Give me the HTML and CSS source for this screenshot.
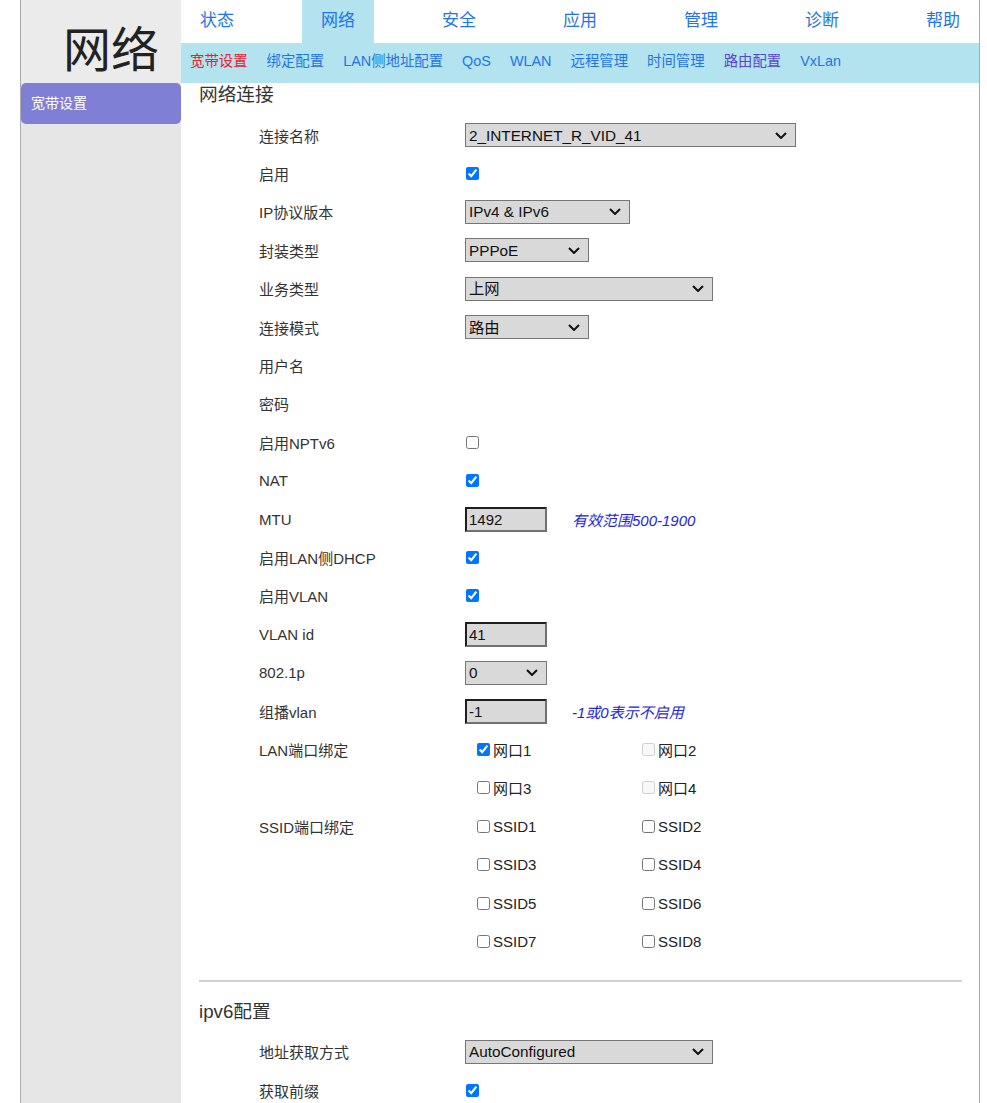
FILE: index.html
```html
<!DOCTYPE html>
<html lang="zh-CN">
<head>
<meta charset="utf-8">
<title>网络</title>
<link rel="stylesheet" href="styles.css">
</head>
<body>
<div class="page">
  <aside class="sidebar">
    <div class="side-title">网络</div>
    <a class="side-item" href="#">宽带设置</a>
  </aside>
  <div class="main">
    <nav class="tabs">
      <div class="tab"><a href="#">状态</a></div>
      <div class="tab"><a class="active" href="#">网络</a></div>
      <div class="tab"><a href="#">安全</a></div>
      <div class="tab"><a href="#">应用</a></div>
      <div class="tab"><a href="#">管理</a></div>
      <div class="tab"><a href="#">诊断</a></div>
      <div class="tab"><a href="#">帮助</a></div>
    </nav>
    <nav class="subnav">
      <a class="current" href="#">宽带设置</a>
      <a href="#">绑定配置</a>
      <a href="#">LAN侧地址配置</a>
      <a href="#">QoS</a>
      <a href="#">WLAN</a>
      <a href="#">远程管理</a>
      <a href="#">时间管理</a>
      <a class="visited" href="#">路由配置</a>
      <a href="#">VxLan</a>
    </nav>
    <div class="content">
      <h3 class="section-title">网络连接</h3>
      <div class="form">
        <div class="row"><span class="label">连接名称</span><span class="ctrl"><select class="sel w330"><option>2_INTERNET_R_VID_41</option></select></span></div>
        <div class="row"><span class="label">启用</span><span class="ctrl"><input type="checkbox" class="chk" checked></span></div>
        <div class="row"><span class="label">IP协议版本</span><span class="ctrl"><select class="sel w164"><option>IPv4 &amp; IPv6</option></select></span></div>
        <div class="row"><span class="label">封装类型</span><span class="ctrl"><select class="sel w123"><option>PPPoE</option></select></span></div>
        <div class="row"><span class="label">业务类型</span><span class="ctrl"><select class="sel w247"><option>上网</option></select></span></div>
        <div class="row"><span class="label">连接模式</span><span class="ctrl"><select class="sel w123"><option>路由</option></select></span></div>
        <div class="row"><span class="label">用户名</span><span class="ctrl"></span></div>
        <div class="row"><span class="label">密码</span><span class="ctrl"></span></div>
        <div class="row"><span class="label">启用NPTv6</span><span class="ctrl"><input type="checkbox" class="chk"></span></div>
        <div class="row"><span class="label">NAT</span><span class="ctrl"><input type="checkbox" class="chk" checked></span></div>
        <div class="row"><span class="label">MTU</span><span class="ctrl"><input type="text" class="txt" value="1492"><span class="hint">有效范围500-1900</span></span></div>
        <div class="row"><span class="label">启用LAN侧DHCP</span><span class="ctrl"><input type="checkbox" class="chk" checked></span></div>
        <div class="row"><span class="label">启用VLAN</span><span class="ctrl"><input type="checkbox" class="chk" checked></span></div>
        <div class="row"><span class="label">VLAN id</span><span class="ctrl"><input type="text" class="txt" value="41"></span></div>
        <div class="row"><span class="label">802.1p</span><span class="ctrl"><select class="sel w81"><option>0</option></select></span></div>
        <div class="row"><span class="label">组播vlan</span><span class="ctrl"><input type="text" class="txt" value="-1"><span class="hint">-1或0表示不启用</span></span></div>
        <div class="row"><span class="label">LAN端口绑定</span><span class="ctrl ports"><label class="port"><input type="checkbox" checked>网口1</label><label class="port"><input type="checkbox" disabled>网口2</label></span></div>
        <div class="row"><span class="label"></span><span class="ctrl ports"><label class="port"><input type="checkbox">网口3</label><label class="port"><input type="checkbox" disabled>网口4</label></span></div>
        <div class="row"><span class="label">SSID端口绑定</span><span class="ctrl ports"><label class="port"><input type="checkbox">SSID1</label><label class="port"><input type="checkbox">SSID2</label></span></div>
        <div class="row"><span class="label"></span><span class="ctrl ports"><label class="port"><input type="checkbox">SSID3</label><label class="port"><input type="checkbox">SSID4</label></span></div>
        <div class="row"><span class="label"></span><span class="ctrl ports"><label class="port"><input type="checkbox">SSID5</label><label class="port"><input type="checkbox">SSID6</label></span></div>
        <div class="row"><span class="label"></span><span class="ctrl ports"><label class="port"><input type="checkbox">SSID7</label><label class="port"><input type="checkbox">SSID8</label></span></div>
      </div>
      <hr class="divider">
      <h3 class="section-title">ipv6配置</h3>
      <div class="form">
        <div class="row"><span class="label">地址获取方式</span><span class="ctrl"><select class="sel w247"><option>AutoConfigured</option></select></span></div>
        <div class="row"><span class="label">获取前缀</span><span class="ctrl"><input type="checkbox" class="chk" checked></span></div>
      </div>
    </div>
  </div>
</div>
</body>
</html>
```

FILE: styles.css
```css
html, body {
  margin: 0;
  padding: 0;
  background: #ffffff;
}

body {
  font-family: "Liberation Sans", "Noto Sans CJK SC", sans-serif;
  color: #333333;
  overflow: hidden;
}

a {
  text-decoration: none;
}

.page {
  display: flex;
  width: 960px;
  min-height: 1103px;
  margin-left: 20px;
  box-sizing: border-box;
  border-left: 1px solid #aaaaaa;
  border-right: 1px solid #aaaaaa;
}

.sidebar {
  width: 160px;
  flex: none;
  background: #e6e6e6;
  display: flex;
  flex-direction: column;
}

.side-title {
  height: 83px;
  box-sizing: border-box;
  padding: 18px 0 0 42px;
  line-height: 65px;
  font-size: 48px;
  color: #222222;
  background: #ebebeb;
}

.side-item {
  display: block;
  height: 41px;
  line-height: 40px;
  padding-left: 10px;
  font-size: 14px;
  color: #ffffff;
  background: #7f7fd5;
  border-radius: 5px;
}

.main {
  flex: 1;
  min-width: 0;
  display: flex;
  flex-direction: column;
}

.tabs {
  display: flex;
  height: 43px;
  overflow: hidden;
}

.tab {
  width: 121px;
  flex: none;
}

.tab a {
  display: inline-block;
  height: 43px;
  line-height: 41px;
  padding: 0 19px 0 19px;
  font-size: 17px;
  color: #1f74ea;
}

.tab a.active {
  background: #b3e3ef;
}

.subnav {
  display: flex;
  height: 40px;
  background: #b3e3ef;
  align-items: center;
}

.subnav a {
  padding: 0 10px 0 9px;
  line-height: 37px;
  height: 40px;
  font-size: 14.4px;
  color: #1f74ea;
}

.subnav a.current {
  color: #e6222b;
}

.subnav a.visited {
  color: #5a45d8;
}

.content {
  padding: 0 17px 0 18px;
}

.section-title {
  margin: 0;
  padding-bottom: 10px;
  line-height: 23px;
  font-size: 18.7px;
  font-weight: normal;
  color: #333333;
}

.form {
  padding-left: 60px;
}

.row {
  display: grid;
  grid-template-columns: 206px 1fr;
  align-items: center;
  height: 38.4px;
}

.label {
  font-size: 15px;
  color: #333333;
}

.ctrl {
  display: flex;
  align-items: center;
  font-size: 15px;
  color: #222222;
}

.sel {
  -webkit-appearance: none;
  appearance: none;
  height: 24px;
  box-sizing: border-box;
  border: 1px solid #767676;
  border-radius: 0;
  background-color: #d9d9d9;
  background-image: url("data:image/svg+xml,%3Csvg xmlns='http://www.w3.org/2000/svg' width='12' height='7' viewBox='0 0 12 7'%3E%3Cpath d='M1 1l5 5 5-5' fill='none' stroke='%23111' stroke-width='2'/%3E%3C/svg%3E");
  background-repeat: no-repeat;
  background-position: right 8px center;
  padding: 0 24px 0 3px;
  margin: 0;
  font-family: "Liberation Sans", "Noto Sans CJK SC", sans-serif;
  font-size: 15.3px;
  color: #111111;
}

.w330 { width: 331px; }
.w247 { width: 248px; }
.w164 { width: 165px; }
.w123 { width: 124px; }
.w81 { width: 82px; }

.txt {
  width: 82px;
  height: 25px;
  box-sizing: border-box;
  margin: 0;
  padding: 0 2px;
  border-style: solid;
  border-width: 2px;
  border-color: #1e1e1e #707070 #707070 #1e1e1e;
  background: #d9d9d9;
  font-family: "Liberation Sans", "Noto Sans CJK SC", sans-serif;
  font-size: 15px;
  color: #111111;
}

.hint {
  margin-left: 25px;
  font-style: italic;
  font-size: 15px;
  color: #2424e0;
}

.chk {
  margin: 0 0 0 1px;
  width: 13px;
  height: 13px;
}

.ports {
  padding-left: 8px;
}

.port {
  display: flex;
  align-items: center;
  width: 165px;
  font-size: 15px;
  color: #222222;
}

.port input {
  margin: 0 3px 0 4px;
  width: 13px;
  height: 13px;
}

.divider {
  margin: 19px 0 18px 0;
  height: 0;
  border: 0;
  border-top: 2px solid #d0d0d0;
}
```
